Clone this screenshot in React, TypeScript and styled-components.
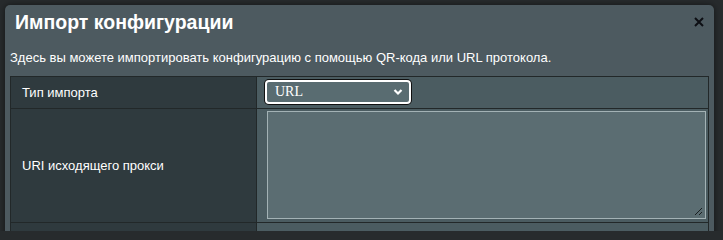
import React from "react";
import styled, { createGlobalStyle } from "styled-components";

const GlobalStyle = createGlobalStyle`
  html, body {
    margin: 0;
    padding: 0;
    height: 100%;
    overflow: hidden;
    background: #272b2d;
    font-family: "Liberation Sans", Arial, sans-serif;
  }
`;

const Page = styled.div`
  padding: 5px 9px 0 5px;
  height: 231px;
  box-sizing: border-box;
  overflow: hidden;
`;

const Modal = styled.div`
  background: #4d5a60;
  border-radius: 5px 5px 0 0;
  height: 260px;
  padding: 0 5px 0 5px;
  box-shadow: 0 0 6px rgba(0, 0, 0, 0.5);
`;

const Header = styled.div`
  display: flex;
  align-items: center;
  justify-content: space-between;
  height: 34px;
  padding: 0 3px 0 5px;
`;

const Title = styled.h1`
  margin: 0;
  font-size: 19.5px;
  font-weight: bold;
  color: #ffffff;
`;

const CloseButton = styled.button`
  border: none;
  background: transparent;
  padding: 0;
  width: 14px;
  height: 14px;
  display: flex;
  cursor: pointer;
`;

const Description = styled.p`
  margin: 0;
  padding: 11px 0 0 0;
  height: 37px;
  box-sizing: border-box;
  font-size: 13px;
  color: #ffffff;
  line-height: 16px;
`;

const Table = styled.table`
  width: 100%;
  border-collapse: collapse;
  border: 1px solid #222829;
`;

const LabelCell = styled.th<{ $h: number }>`
  width: 234px;
  background: #2f3a3e;
  border: 1px solid #222829;
  color: #ffffff;
  font-size: 13px;
  font-weight: normal;
  text-align: left;
  padding: 0 0 0 11px;
  height: ${(p) => p.$h}px;
`;

const ValueCell = styled.td`
  background: #4b5c61;
  border: 1px solid #222829;
  padding: 1px 2px 2px 8px;
`;

const SelectBox = styled.div`
  width: 146px;
  height: 24px;
  box-sizing: border-box;
  border: 2px solid #ffffff;
  border-radius: 4px;
  background: #596c71;
  box-shadow: 0 0 0 1px #111;
  display: flex;
  align-items: center;
  justify-content: space-between;
  padding: 0 6px 0 8px;
  font-family: "Liberation Serif", "Times New Roman", serif;
  font-size: 14px;
  color: #ffffff;
`;

const TextArea = styled.div`
  height: 108px;
  box-sizing: border-box;
  margin-left: 2px;
  border: 1px solid #a3b2b5;
  background: #5b6d72;
  position: relative;
`;

const Grip = styled.svg`
  position: absolute;
  right: 2px;
  bottom: 2px;
`;

export default function App() {
  return (
    <>
      <GlobalStyle />
      <Page>
        <Modal>
          <Header>
            <Title>Импорт конфигурации</Title>
            <CloseButton aria-label="close">
              <svg width="14" height="14" viewBox="0 0 14 14">
                <path d="M3 3 L11 11 M11 3 L3 11" stroke="#0d0f14" strokeWidth="2" />
              </svg>
            </CloseButton>
          </Header>
          <Description>
            Здесь вы можете импортировать конфигурацию с помощью QR-кода или URL протокола.
          </Description>
          <Table>
            <tbody>
              <tr>
                <LabelCell $h={31}>Тип импорта</LabelCell>
                <ValueCell>
                  <SelectBox>
                    URL
                    <svg width="10" height="8" viewBox="0 0 10 8">
                      <path d="M1.5 2 L5 5.5 L8.5 2" stroke="#ffffff" strokeWidth="2.2" fill="none" />
                    </svg>
                  </SelectBox>
                </ValueCell>
              </tr>
              <tr>
                <LabelCell $h={113}>URI исходящего прокси</LabelCell>
                <ValueCell>
                  <TextArea>
                    <Grip width="9" height="9" viewBox="0 0 9 9">
                      <path d="M8 1 L1 8 M8 5 L5 8" stroke="#1a1f21" strokeWidth="1" />
                    </Grip>
                  </TextArea>
                </ValueCell>
              </tr>
              <tr>
                <LabelCell $h={30}>&nbsp;</LabelCell>
                <ValueCell />
              </tr>
            </tbody>
          </Table>
        </Modal>
      </Page>
    </>
  );
}
